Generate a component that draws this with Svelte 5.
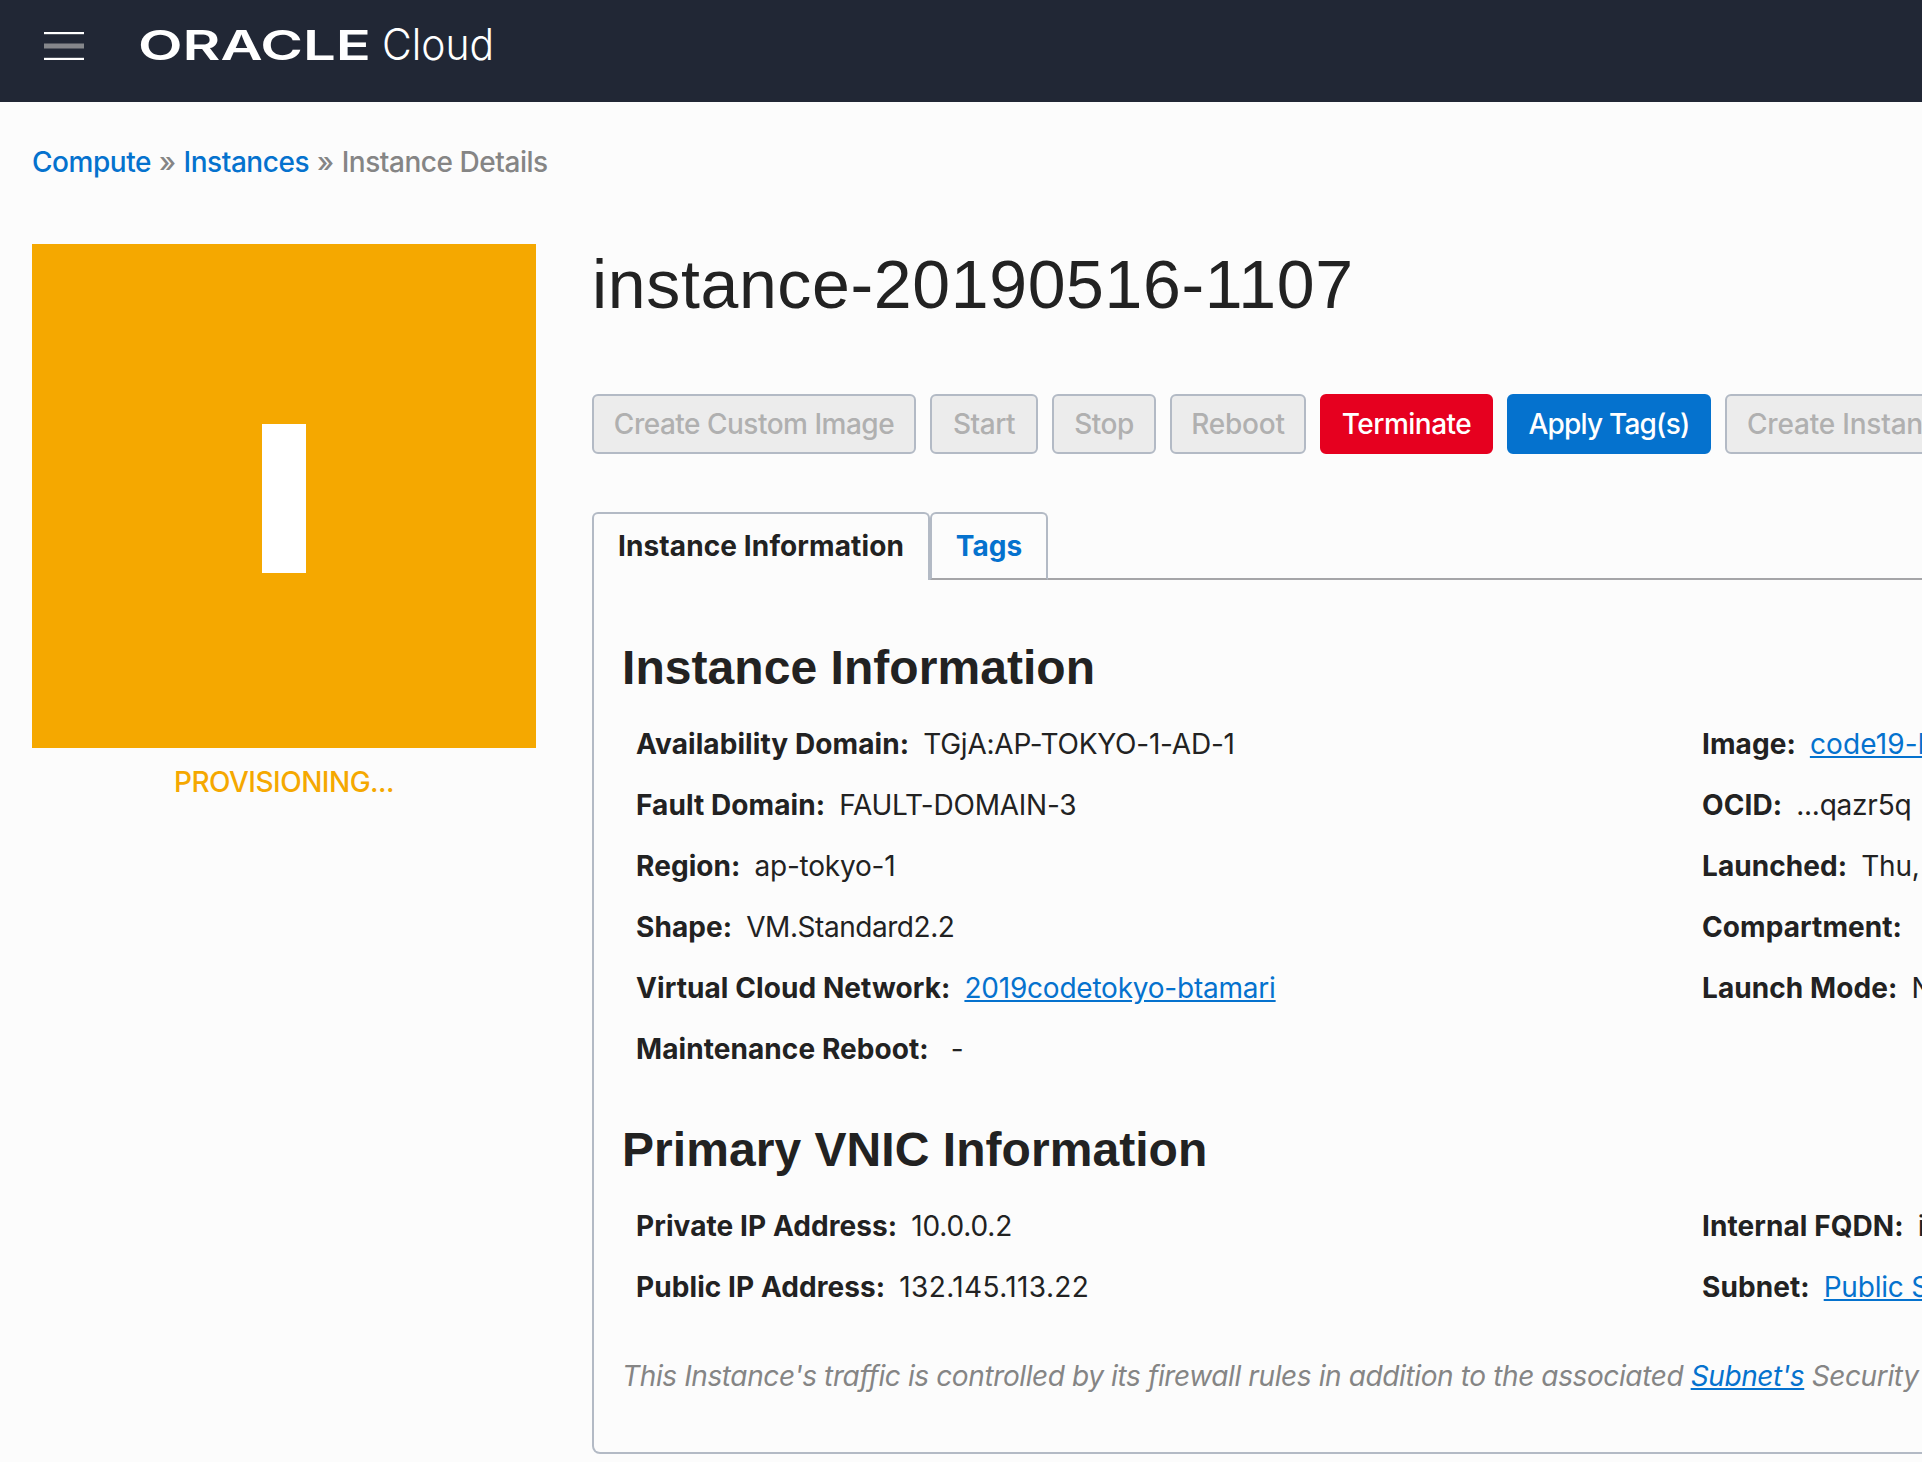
<script>
  const actions = [
    { label: 'Create Custom Image', kind: 'w324' },
    { label: 'Start', kind: 'w108' },
    { label: 'Stop', kind: 'w104' },
    { label: 'Reboot', kind: 'w136' },
    { label: 'Terminate', kind: 'danger w173' },
    { label: 'Apply Tag(s)', kind: 'primary w204' },
    { label: 'Create Instance Configuration', kind: 'w440' },
  ];

  const sections = [
    {
      title: 'Instance Information',
      left: [
        { label: 'Availability Domain:', value: 'TGjA:AP-TOKYO-1-AD-1' },
        { label: 'Fault Domain:', value: 'FAULT-DOMAIN-3' },
        { label: 'Region:', value: 'ap-tokyo-1' },
        { label: 'Shape:', value: 'VM.Standard2.2', kind: 'tight' },
        { label: 'Virtual Cloud Network:', value: '2019codetokyo-btamari', link: true },
        { label: 'Maintenance Reboot:', value: '-', kind: 'empty' },
      ],
      right: [
        { label: 'Image:', value: 'code19-btamari', link: true, kind: 'loose' },
        { label: 'OCID:', value: '...qazr5q' },
        { label: 'Launched:', value: 'Thu,' },
        { label: 'Compartment:', value: '' },
        { label: 'Launch Mode:', value: 'NATIVE' },
      ],
    },
    {
      title: 'Primary VNIC Information',
      left: [
        { label: 'Private IP Address:', value: '10.0.0.2', kind: 'short-ip' },
        { label: 'Public IP Address:', value: '132.145.113.22', kind: 'long-ip' },
      ],
      right: [
        { label: 'Internal FQDN:', value: 'instance' },
        { label: 'Subnet:', value: 'Public Subnet', link: true },
      ],
    },
  ];
</script>

{#snippet field(item)}
  <div class="field">
    <dt>{item.label}</dt>
    <dd class={item.kind}>
      {#if item.link}<a href="#top">{item.value}</a>{:else}{item.value}{/if}
    </dd>
  </div>
{/snippet}

<div class="page" id="top">
  <header>
    <svg class="menu" width="40" height="30" viewBox="0 0 40 30" aria-label="Menu">
      <rect width="40" height="2.2" fill="#fff" />
      <rect y="11.5" width="40" height="5" fill="#85878b" />
      <rect y="25.8" width="40" height="2.2" fill="#fff" />
    </svg>
    <svg class="logo" width="360" height="40" viewBox="0 0 360 40">
      <text class="oracle" x="-2" y="35" textLength="233" lengthAdjust="spacingAndGlyphs">ORACLE</text>
      <text class="cloud" x="242" y="35" textLength="112" lengthAdjust="spacingAndGlyphs">Cloud</text>
    </svg>
  </header>

  <nav class="crumbs">
    <a href="#top">Compute</a><span>»</span><a href="#top">Instances</a><span>»</span>Instance Details
  </nav>

  <main>
    <aside>
      <div class="tile"><div class="bar"></div></div>
      <div class="status">PROVISIONING...</div>
    </aside>

    <article>
      <h1>instance-20190516-1107</h1>

      <div class="actions">
        {#each actions as action}
          <button class={action.kind}>{action.label}</button>
        {/each}
      </div>

      <div class="tabs">
        <div class="tab active">Instance Information</div>
        <div class="tab">Tags</div>
        <div class="rest"></div>
      </div>

      <div class="panel">
        {#each sections as section}
          <section>
            <h2>{section.title}</h2>
            <div class="columns">
              <dl>{#each section.left as item}{@render field(item)}{/each}</dl>
              <dl>{#each section.right as item}{@render field(item)}{/each}</dl>
            </div>
          </section>
        {/each}
        <p class="note">
          This Instance's traffic is controlled by its firewall rules in addition to the associated
          <a href="#top">Subnet's</a> Security Lists
        </p>
      </div>
    </article>
  </main>
</div>

<style>
  :global(body) { background: #fcfcfc; overflow: hidden; }
  .page {
    width: 1922px;
    height: 1462px;
    overflow: hidden;
    background: #fcfcfc;
    color: #222;
    font: 28px/34px Inter, 'Liberation Sans', sans-serif;
    white-space: nowrap;
  }
  a { color: #0572ce; }
  header {
    height: 102px;
    background: #212735;
    display: flex;
    padding-left: 44px;
  }
  .menu { margin-top: 32px; }
  .logo { margin: 25px 0 0 56px; fill: #fff; overflow: visible; }
  .oracle { font: 600 41px Inter, sans-serif; }
  .cloud { font: 300 43px Inter, sans-serif; }
  .crumbs {
    padding: 43px 0 0 32px;
    height: 99px;
    box-sizing: border-box;
    color: #858585;
    font-weight: 450;
    letter-spacing: -0.46px;
  }
  .crumbs a { text-decoration: none; }
  .crumbs span { margin: 0 8px; }

  main { display: flex; padding-left: 32px; }
  aside { width: 504px; margin: 43px 56px 0 0; flex: none; }
  .tile { height: 504px; background: #f5a800; display: grid; place-items: center; }
  .bar { width: 44px; height: 149px; margin-top: 5px; background: #fff; }
  .status {
    margin-top: 17px;
    text-align: center;
    color: #f5a800;
    font-weight: 450;
    letter-spacing: -0.5px;
  }

  article { width: 1500px; flex: none; }
  h1 {
    margin: 0;
    height: 193px;
    padding-top: 44px;
    box-sizing: border-box;
    font: 400 68px/78px 'Liberation Sans', sans-serif;
    letter-spacing: 0.65px;
  }
  .actions { display: flex; gap: 14px; }
  button {
    box-sizing: border-box;
    height: 60px;
    flex: none;
    padding: 0;
    border: 2px solid #b3bac5;
    border-radius: 6px;
    background: #ececec;
    color: #b0b0b0;
    font: inherit;
    font-weight: 450;
    letter-spacing: -0.5px;
  }
  .danger { background: #e6001f; border-color: #e6001f; color: #fff; }
  .primary { background: #0572ce; border-color: #0572ce; color: #fff; }
  .w324 { width: 324px; }
  .w108 { width: 108px; }
  .w104 { width: 104px; }
  .w136 { width: 136px; letter-spacing: -0.2px; }
  .w173 { width: 173px; }
  .w204 { width: 204px; letter-spacing: -0.8px; }
  .w440 { width: 440px; text-align: left; padding-left: 20px; letter-spacing: -0.2px; }

  .tabs { display: flex; margin-top: 58px; height: 68px; }
  .tab {
    box-sizing: border-box;
    width: 118px;
    border: 2px solid #b3bac5;
    border-bottom-color: #a5a5a8;
    border-radius: 6px 6px 0 0;
    padding-top: 15px;
    text-align: center;
    font-weight: 700;
    letter-spacing: 0.12px;
    color: #0572ce;
  }
  .tab.active { width: 338px; border-bottom: 0; color: #222; }
  .rest { flex: 1; border-bottom: 2px solid #a5a5a8; }

  .panel {
    height: 874px;
    box-sizing: border-box;
    border: 2px solid #b3bac5;
    border-top: 0;
    border-radius: 0 0 0 8px;
    padding: 60px 0 0 28px;
  }
  h2 {
    margin: 0 0 19px;
    font: 700 48px/55px 'Liberation Sans', sans-serif;
    letter-spacing: 0.05px;
  }
  .columns { display: grid; grid-template-columns: 1066px 1fr; padding-left: 14px; }
  dl { margin: 0; }
  .field { display: flex; height: 61px; line-height: 61px; }
  dt { font-weight: 700; margin-right: 14px; letter-spacing: 0.08px; }
  dd { margin: 0; letter-spacing: -0.22px; }
  .empty { margin-left: 8px; }
  .tight { letter-spacing: -0.45px; }
  .loose { letter-spacing: 0.15px; }
  .short-ip { letter-spacing: -0.15px; }
  .long-ip { letter-spacing: 0.4px; }
  section + section { margin-top: 42px; }
  .note { margin: 41px 0 0; font-style: italic; color: #858585; letter-spacing: -0.39px; }
</style>
